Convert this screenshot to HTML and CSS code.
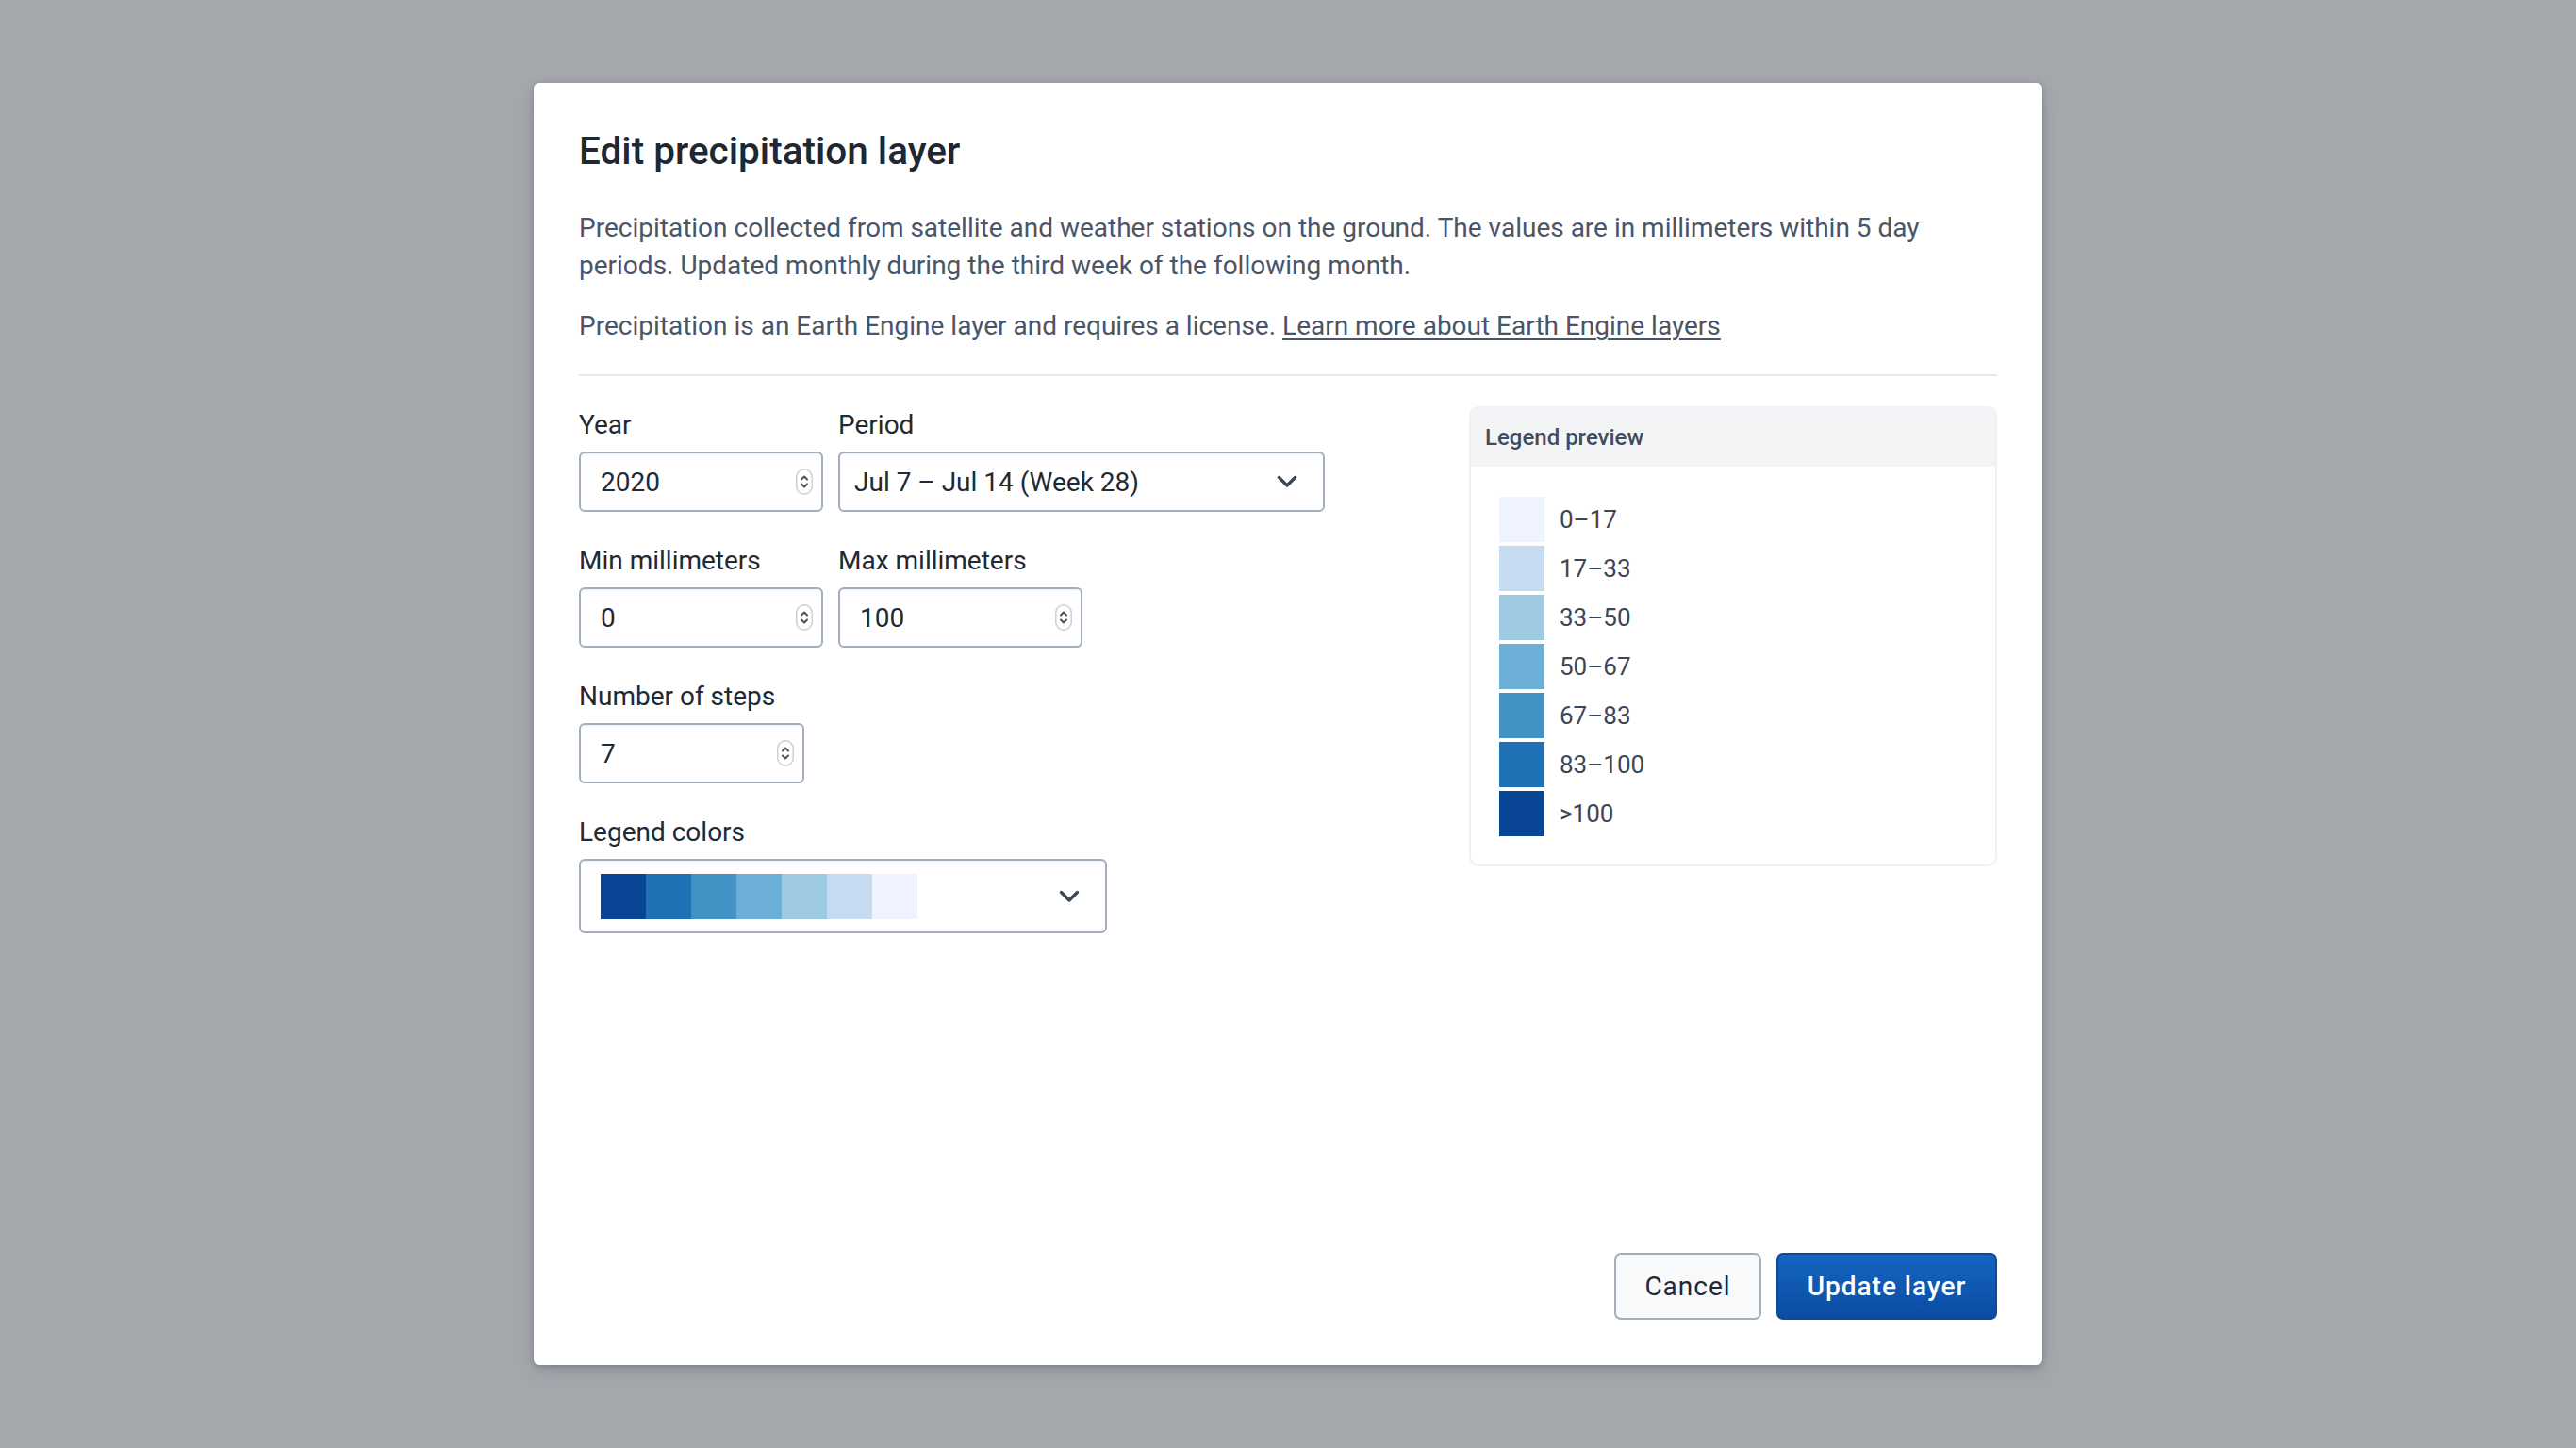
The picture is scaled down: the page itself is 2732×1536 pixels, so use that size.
FILE: index.html
```html
<!DOCTYPE html>
<html lang="en">
<head>
<meta charset="utf-8">
<title>Edit precipitation layer</title>
<link rel="stylesheet" href="styles.css">
</head>
<body>
<div class="backdrop">
  <div class="modal">
    <h1 class="title">Edit precipitation layer</h1>
    <p class="desc">Precipitation collected from satellite and weather stations on the ground. The values are in millimeters within 5 day periods. Updated monthly during the third week of the following month.</p>
    <p class="desc desc-2">Precipitation is an Earth Engine layer and requires a license. <a class="link" href="#">Learn more about Earth Engine layers</a></p>
    <div class="divider"></div>
    <div class="content">
      <div class="form">
        <div class="row">
          <div class="field">
            <div class="label">Year</div>
            <div class="input num w-259"><span class="val">2020</span>
              <svg class="spin" width="18" height="28" viewBox="0 0 18 28"><rect x="0.75" y="0.75" width="16.5" height="26.5" rx="8.25" fill="#fff" stroke="#cfcfcf" stroke-width="1.5"/><path d="M6 11.5 L9 8.5 L12 11.5" fill="none" stroke="#4b4f55" stroke-width="2" stroke-linecap="round" stroke-linejoin="round"/><path d="M6 16.5 L9 19.5 L12 16.5" fill="none" stroke="#4b4f55" stroke-width="2" stroke-linecap="round" stroke-linejoin="round"/></svg>
            </div>
          </div>
          <div class="field">
            <div class="label">Period</div>
            <div class="input select w-516"><span class="val">Jul 7 – Jul 14 (Week 28)</span>
              <svg class="chev" width="22" height="14" viewBox="0 0 22 14"><path d="M2.5 2.5 L11 11 L19.5 2.5" fill="none" stroke="#3b4756" stroke-width="3.4" stroke-linecap="round" stroke-linejoin="round"/></svg>
            </div>
          </div>
        </div>
        <div class="row">
          <div class="field">
            <div class="label">Min millimeters</div>
            <div class="input num w-259"><span class="val">0</span>
              <svg class="spin" width="18" height="28" viewBox="0 0 18 28"><rect x="0.75" y="0.75" width="16.5" height="26.5" rx="8.25" fill="#fff" stroke="#cfcfcf" stroke-width="1.5"/><path d="M6 11.5 L9 8.5 L12 11.5" fill="none" stroke="#4b4f55" stroke-width="2" stroke-linecap="round" stroke-linejoin="round"/><path d="M6 16.5 L9 19.5 L12 16.5" fill="none" stroke="#4b4f55" stroke-width="2" stroke-linecap="round" stroke-linejoin="round"/></svg>
            </div>
          </div>
          <div class="field">
            <div class="label">Max millimeters</div>
            <div class="input num w-259"><span class="val">100</span>
              <svg class="spin" width="18" height="28" viewBox="0 0 18 28"><rect x="0.75" y="0.75" width="16.5" height="26.5" rx="8.25" fill="#fff" stroke="#cfcfcf" stroke-width="1.5"/><path d="M6 11.5 L9 8.5 L12 11.5" fill="none" stroke="#4b4f55" stroke-width="2" stroke-linecap="round" stroke-linejoin="round"/><path d="M6 16.5 L9 19.5 L12 16.5" fill="none" stroke="#4b4f55" stroke-width="2" stroke-linecap="round" stroke-linejoin="round"/></svg>
            </div>
          </div>
        </div>
        <div class="row">
          <div class="field">
            <div class="label">Number of steps</div>
            <div class="input num w-239"><span class="val">7</span>
              <svg class="spin" width="18" height="28" viewBox="0 0 18 28"><rect x="0.75" y="0.75" width="16.5" height="26.5" rx="8.25" fill="#fff" stroke="#cfcfcf" stroke-width="1.5"/><path d="M6 11.5 L9 8.5 L12 11.5" fill="none" stroke="#4b4f55" stroke-width="2" stroke-linecap="round" stroke-linejoin="round"/><path d="M6 16.5 L9 19.5 L12 16.5" fill="none" stroke="#4b4f55" stroke-width="2" stroke-linecap="round" stroke-linejoin="round"/></svg>
            </div>
          </div>
        </div>
        <div class="row">
          <div class="field">
            <div class="label">Legend colors</div>
            <div class="input colors w-560">
              <div class="ramp">
                <span class="sw c7"></span><span class="sw c6"></span><span class="sw c5"></span><span class="sw c4"></span><span class="sw c3"></span><span class="sw c2"></span><span class="sw c1"></span>
              </div>
              <svg class="chev" width="22" height="14" viewBox="0 0 22 14"><path d="M2.5 2.5 L11 11 L19.5 2.5" fill="none" stroke="#3b4756" stroke-width="3.4" stroke-linecap="round" stroke-linejoin="round"/></svg>
            </div>
          </div>
        </div>
      </div>
      <div class="legend">
        <div class="legend-head">Legend preview</div>
        <div class="legend-body">
          <div class="item"><span class="sw c1"></span><span class="lbl">0–17</span></div>
          <div class="item"><span class="sw c2"></span><span class="lbl">17–33</span></div>
          <div class="item"><span class="sw c3"></span><span class="lbl">33–50</span></div>
          <div class="item"><span class="sw c4"></span><span class="lbl">50–67</span></div>
          <div class="item"><span class="sw c5"></span><span class="lbl">67–83</span></div>
          <div class="item"><span class="sw c6"></span><span class="lbl">83–100</span></div>
          <div class="item"><span class="sw c7"></span><span class="lbl">&gt;100</span></div>
        </div>
      </div>
    </div>
    <div class="footer">
      <button class="btn btn-secondary">Cancel</button>
      <button class="btn btn-primary">Update layer</button>
    </div>
  </div>
</div>
</body>
</html>
```

FILE: styles.css
```css
* { box-sizing: border-box; }
html, body { margin: 0; padding: 0; }
body {
  font-family: Roboto, "Liberation Sans", sans-serif;
  background: #a5a8ad;
  color: #212934;
}
.backdrop {
  width: 2732px;
  height: 1536px;
  display: flex;
  align-items: center;
  justify-content: center;
}
.modal {
  width: 1600px;
  height: 1360px;
  background: #fff;
  border-radius: 6px;
  box-shadow: 0 2px 6px rgba(40, 48, 60, 0.25), 0 8px 24px rgba(40, 48, 60, 0.12);
  padding: 48px 48px 48px;
  display: flex;
  flex-direction: column;
}
.title {
  margin: 0 0 38px;
  font-size: 40.5px;
  line-height: 48px;
  font-weight: 500;
  color: #1f2731;
}
.desc {
  margin: 0;
  font-size: 28px;
  line-height: 40px;
  color: #4a5568;
}
.desc-2 { margin-top: 24px; }
.link { color: #4a5568; text-decoration: underline; text-underline-offset: 4px; text-decoration-thickness: 2px; }
.divider {
  height: 2px;
  background: #e6eaee;
  margin: 31px 0 32px;
}
.content {
  display: flex;
  justify-content: space-between;
  align-items: flex-start;
}
.form {
  display: flex;
  flex-direction: column;
  gap: 32px;
}
.row { display: flex; gap: 16px; }
.field { display: flex; flex-direction: column; gap: 8px; }
.label {
  font-size: 28px;
  line-height: 40px;
  color: #212934;
}
.input {
  height: 64px;
  border: 2px solid #a3afbc;
  border-radius: 6px;
  background: #fff;
  display: flex;
  align-items: center;
  justify-content: space-between;
  font-size: 28px;
  color: #212934;
  box-shadow: inset 0 2px 1px rgba(0, 0, 0, 0.04);
}
.num { padding: 0 9px 0 21px; }
.select { padding: 0 27px 0 15px; }
.w-259 { width: 259px; }
.w-239 { width: 239px; }
.w-516 { width: 516px; }
.w-560 { width: 560px; }
.spin { display: block; }
.chev { display: block; }
.colors { height: 79px; padding: 0 27px 0 21px; }
.ramp { display: flex; }
.sw { display: block; width: 48px; height: 48px; }
.c1 { background: #eff3ff; }
.c2 { background: #c6dbef; }
.c3 { background: #9ecae1; }
.c4 { background: #6baed6; }
.c5 { background: #4292c6; }
.c6 { background: #2171b5; }
.c7 { background: #084594; }
.legend {
  width: 560px;
  border: 2px solid #eef0f3;
  border-radius: 10px;
  overflow: hidden;
}
.legend-head {
  background: #f3f4f6;
  height: 62px;
  padding: 0 15px;
  display: flex;
  align-items: center;
  font-size: 24px;
  font-weight: 500;
  color: #3e4c5e;
}
.legend-body {
  padding: 32px 30px 30px;
  display: flex;
  flex-direction: column;
  gap: 4px;
}
.item { display: flex; align-items: center; gap: 16px; }
.lbl { font-size: 26px; color: #3b4656; }
.footer {
  margin-top: auto;
  display: flex;
  justify-content: flex-end;
  gap: 16px;
}
.btn {
  height: 71px;
  border-radius: 7px;
  font-family: Roboto, "Liberation Sans", sans-serif;
  font-size: 28px;
  letter-spacing: 1px;
  cursor: pointer;
}
.btn-secondary {
  width: 156px;
  background: #f8f9fb;
  border: 2px solid #a3afbc;
  color: #212934;
}
.btn-primary {
  width: 234px;
  background: linear-gradient(#1565c2, #0a4ca2);
  border: 2px solid #0a4b9e;
  color: #fff;
  font-weight: 500;
}
```
